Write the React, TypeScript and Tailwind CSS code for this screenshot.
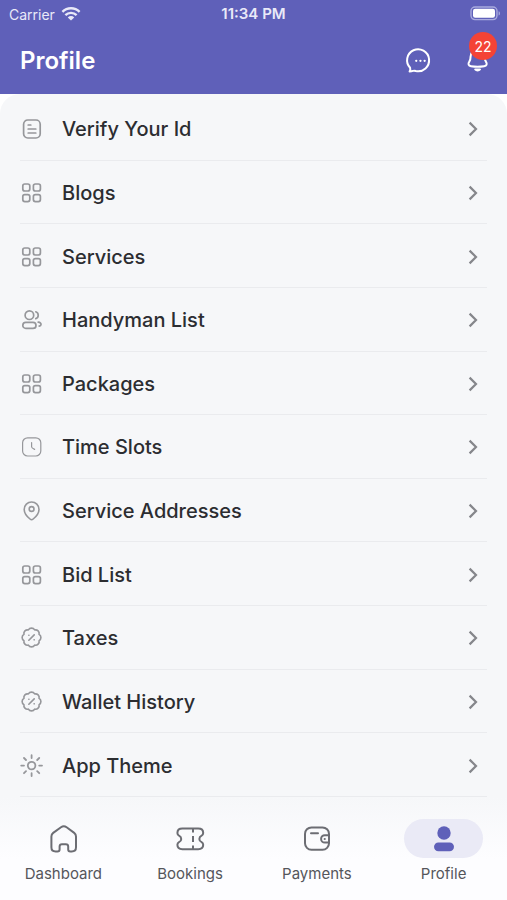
import React from "react";

const line = {
  fill: "none",
  stroke: "currentColor",
  strokeLinecap: "round" as const,
  strokeLinejoin: "round" as const,
  "aria-hidden": true,
};

function DocumentIcon() {
  return (
    <svg {...line} viewBox="0 0 22 22" strokeWidth="1.7" className="size-[22px]">
      <rect x="2.6" y="2" width="16.6" height="18" rx="4.2" />
      <path d="M7.2 7h2.6M7.2 11h7.6M7.2 15h7.6" />
    </svg>
  );
}

function GridIcon() {
  return (
    <svg {...line} viewBox="0 0 22 22" strokeWidth="1.7" className="size-[22px]">
      <rect x="1.8" y="2" width="7" height="7" rx="2" />
      <rect x="12.4" y="2" width="7" height="7" rx="2" />
      <rect x="1.8" y="12.6" width="7" height="7" rx="2" />
      <rect x="12.4" y="12.6" width="7" height="7" rx="2" />
    </svg>
  );
}

function PeopleIcon() {
  return (
    <svg {...line} viewBox="0 0 22 22" strokeWidth="1.7" className="size-[22px]">
      <circle cx="8.4" cy="6.2" r="4.3" />
      <rect x="1.8" y="13.4" width="13.2" height="6" rx="3" />
      <path d="M14.8 2.8a3.6 3.6 0 0 1 0 6.8M17.2 13.2c2.2.2 3 1.2 2.8 2.4-.1.8-.8 1.3-1.8 1.5" />
    </svg>
  );
}

function ClockIcon() {
  return (
    <svg {...line} viewBox="0 0 22 22" strokeWidth="1.2" className="size-[22px]">
      <rect x="1.6" y="1.8" width="18.2" height="18.2" rx="5" />
      <path d="M10.6 6.6v4.4c0 .8 1 1.4 3 2.4" />
    </svg>
  );
}

function PinIcon() {
  return (
    <svg {...line} viewBox="0 0 22 22" strokeWidth="1.6" className="size-[22px]">
      <path d="M3.2 9.4a7.4 7.4 0 0 1 14.8 0c0 4-3.2 7.4-5.8 9.6a2.4 2.4 0 0 1-3.2 0C6.4 16.8 3.2 13.4 3.2 9.4z" />
      <circle cx="10.6" cy="9" r="2.4" />
    </svg>
  );
}

function PercentIcon() {
  return (
    <svg {...line} viewBox="0 0 23 23" strokeWidth="1.7" className="size-[22px]">
      <path d="M7.7 3.1A3.8 3.8 0 0 1 14.3 3.1A3.8 3.8 0 0 1 18.9 7.7A3.8 3.8 0 0 1 18.9 14.3A3.8 3.8 0 0 1 14.3 18.9A3.8 3.8 0 0 1 7.7 18.9A3.8 3.8 0 0 1 3.1 14.3A3.8 3.8 0 0 1 3.1 7.7A3.8 3.8 0 0 1 7.7 3.1z" />
      <path d="M8.2 13.8l5.6-5.6M8.2 8.6h.1M13.7 13.4h.1" />
    </svg>
  );
}

function SunIcon() {
  return (
    <svg {...line} viewBox="0 0 22 22" strokeWidth="1.8" className="size-[22px] overflow-visible">
      <circle cx="10.6" cy="10.6" r="3.8" />
      <path d="M10.6.2V3M10.6 18.2V21M.2 10.6H3M18.2 10.6H21M3 3l2 2M16.2 16.2l2 2M3 18.2l2-2M16.2 5l2-2" />
    </svg>
  );
}

function ChevronIcon() {
  return (
    <svg viewBox="0 0 16 20" fill="none" stroke="#85868b" strokeWidth="2.2" aria-hidden="true" className="h-5 w-4">
      <path d="M4.6 3.6l6.4 6.4-6.4 6.4" />
    </svg>
  );
}

function WifiIcon() {
  return (
    <svg viewBox="0 0 20 16" fill="none" stroke="currentColor" strokeWidth="2.4" aria-hidden="true" className="h-4 w-5">
      <path d="M1.4 5.8a12.3 12.3 0 0 1 17.2 0M4.4 9.2a7.9 7.9 0 0 1 11.2 0" />
      <path d="M6.8 11.4a4.5 4.5 0 0 1 6.4 0l-3.2 3.2z" fill="currentColor" stroke="none" />
    </svg>
  );
}

function BatteryIcon() {
  return (
    <svg viewBox="0 0 32 16" aria-hidden="true" className="h-4 w-8">
      <rect x="1" y="1" width="26" height="12.6" rx="4" fill="none" stroke="#a9aade" strokeWidth="1.4" />
      <rect x="3" y="2.8" width="22" height="9" rx="2.2" fill="#fff" />
      <path d="M28.6 5.2c1.8.6 1.8 3.8 0 4.4z" fill="#a9aade" />
    </svg>
  );
}

function ChatIcon() {
  return (
    <svg {...line} viewBox="0 0 26 26" strokeWidth="2" className="size-[26px] overflow-visible">
      <path d="M2.6 23.4c.9-1 .9-2.2.5-3.600A11 11 0 1 1 8.8 23c-1-.4-1.800-.4-2.800-.1-1.200.4-2.200.5-3.400.5z" />
      <path d="M9.2 12.800h.1M13.400 12.800h.1M17.600 12.800h.1" strokeWidth="2.2" />
    </svg>
  );
}

function BellIcon() {
  return (
    <svg {...line} viewBox="0 0 26 26" strokeWidth="2" className="size-[26px]">
      <path d="M12.6 1.8c-4.4 0-7 3-7 6.6 0 3-.2 3.8-1.4 5.4-1.6 2.2-.6 4 1.8 4.4 4 .6 9.2.6 13.2 0 2.4-.4 3.4-2.2 1.8-4.4-1.2-1.6-1.4-2.4-1.4-5.4 0-3.600-2.600-6.600-7-6.600z" />
      <path d="M10.2 21.4c1.2 1.4 3.6 1.4 4.8 0z" />
    </svg>
  );
}

function HomeIcon() {
  return (
    <svg {...line} viewBox="0 0 30 30" strokeWidth="2" className="size-[30px]">
      <path d="M9.4 27.4H7.6c-2.6 0-4.2-1.6-4.2-4.2V12.4c0-1.6.6-2.6 1.8-3.5l7.8-5.6c1.8-1.3 3.8-1.3 5.6 0l7.6 5.6c1.2.9 1.8 1.9 1.8 3.5v10.8c0 2.6-1.6 4.2-4.2 4.2h-1.6c-1.4 0-2-.8-2-2v-2.8c0-1.6-.8-2.4-2.4-2.4h-3.8c-1.6 0-2.4.8-2.4 2.4v2.8c0 1.2-.8 2-2.2 2z" />
    </svg>
  );
}

function TicketIcon() {
  return (
    <svg {...line} viewBox="0 0 30 30" strokeWidth="2" className="size-[30px]">
      <path d="M7.4 4.6h15.8c3.2 0 5 1.6 5 4.4 0 1.2-.4 2-1.6 2.6-3 1.4-3 5.2 0 6.6 1.2.6 1.6 1.4 1.6 2.6 0 2.8-1.8 4.4-5 4.4H7.4c-3.2 0-5-1.6-5-4.4 0-1.2.4-2 1.6-2.6 3-1.4 3-5.2 0-6.6-1.2-.6-1.6-1.4-1.6-2.6 0-2.8 1.8-4.4 5-4.4z" />
      <path d="M18 4.6v3.8M18 12v6M18 21.6v3.6" strokeLinecap="butt" />
    </svg>
  );
}

function WalletIcon() {
  return (
    <svg {...line} viewBox="0 0 30 30" strokeWidth="2" className="size-[30px]">
      <rect x="3" y="3.4" width="24" height="22.4" rx="6.5" />
      <path d="M9 9.2h7" />
      <path d="M27 11.2h-4.2a3.7 3.7 0 0 0 0 7.4H27" />
      <path d="M22.6 14.9h.2" />
    </svg>
  );
}

function UserIcon() {
  return (
    <svg viewBox="0 0 30 30" fill="currentColor" aria-hidden="true" className="size-[30px]">
      <circle cx="15" cy="9" r="6.7" />
      <rect x="5" y="18.4" width="20" height="8.8" rx="4.4" />
    </svg>
  );
}

const menu = [
  { label: "Verify Your Id", Icon: DocumentIcon },
  { label: "Blogs", Icon: GridIcon },
  { label: "Services", Icon: GridIcon },
  { label: "Handyman List", Icon: PeopleIcon },
  { label: "Packages", Icon: GridIcon },
  { label: "Time Slots", Icon: ClockIcon },
  { label: "Service Addresses", Icon: PinIcon },
  { label: "Bid List", Icon: GridIcon },
  { label: "Taxes", Icon: PercentIcon },
  { label: "Wallet History", Icon: PercentIcon },
  { label: "App Theme", Icon: SunIcon },
];

const tabs = [
  { label: "Dashboard", Icon: HomeIcon },
  { label: "Bookings", Icon: TicketIcon },
  { label: "Payments", Icon: WalletIcon },
  { label: "Profile", Icon: UserIcon, active: true },
];

export default function App() {
  return (
    <div className="flex min-h-screen flex-col bg-white font-['Inter',sans-serif]">
      <header className="bg-[#5f60b9] text-white">
        <div className="grid h-7 grid-cols-3 items-center px-[9px] text-[#e9e9f8]">
          <div className="flex items-center gap-[6px] text-[14px]">
            Carrier <WifiIcon />
          </div>
          <span className="text-center text-[15px] font-semibold">11:34 PM</span>
          <div className="-mr-1 flex justify-end">
            <BatteryIcon />
          </div>
        </div>
        <div className="flex h-[66px] items-center justify-between pr-4 pl-5">
          <h1 className="text-[24px] font-semibold">Profile</h1>
          <div className="flex items-center gap-8">
            <button type="button" aria-label="Messages">
              <ChatIcon />
            </button>
            <button type="button" aria-label="Notifications" className="relative">
              <BellIcon />
              <span className="absolute -top-4 left-1 flex size-7 items-center justify-center rounded-full bg-[#f44336] text-[14px]">
                22
              </span>
            </button>
          </div>
        </div>
      </header>

      <main className="flex flex-1 flex-col rounded-t-[20px] bg-[#f6f7f9] px-5 pt-[3px]">
        <ul className="grid flex-1 auto-rows-fr">
          {menu.map(({ label, Icon }) => (
            <li key={label} className="flex border-b border-[#eaebee]">
              <a href="#" className="flex min-h-12 flex-1 items-center gap-[19px] pt-[2px] pr-[6px] pl-px">
                <span className="text-[#96979b]">
                  <Icon />
                </span>
                <span className="flex-1 text-[20px] font-medium text-[#2c2d31]">{label}</span>
                <ChevronIcon />
              </a>
            </li>
          ))}
        </ul>
      </main>

      <nav className="grid h-[103px] grid-cols-4 bg-linear-to-b from-[#f6f7f9] to-[#fdfdff] to-60% pt-[22px]">
        {tabs.map(({ label, Icon, active }) => (
          <a key={label} href="#" className="flex flex-col items-center gap-[6px]">
            <span
              className={
                active
                  ? "flex h-[39px] w-[79px] items-center justify-center rounded-full bg-[#eaeaf6] text-[#5f60b9]"
                  : "flex h-[39px] w-[79px] items-center justify-center text-[#6c6d73]"
              }
            >
              <Icon />
            </span>
            <span className="text-[15px] leading-5 text-[#55565b]">{label}</span>
          </a>
        ))}
      </nav>
    </div>
  );
}
